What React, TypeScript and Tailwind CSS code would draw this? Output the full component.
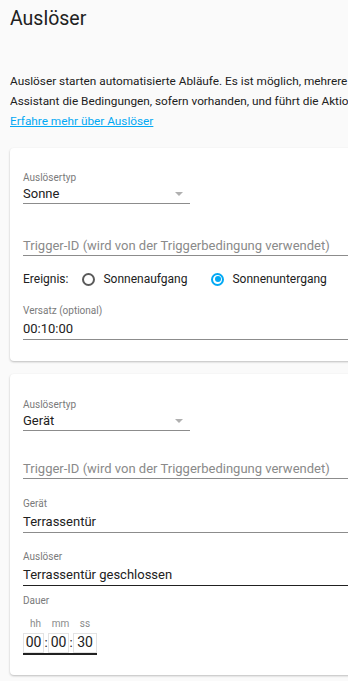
import React from 'react';

const FONT = { fontFamily: 'Roboto, "Noto Sans", Arial, sans-serif' };

function SelectField({ label, value }: { label: string; value: string }) {
  return (
    <div className="w-[167px]">
      <div className="text-[10px] leading-[14px] text-[#7a7a7a]">{label}</div>
      <div className="flex items-center justify-between h-[19px] border-b border-[#8c8c8c]">
        <span className="text-[13px] text-[#212121]">{value}</span>
        <span className="mr-[7px] h-0 w-0 border-x-[4px] border-t-[4px] border-x-transparent border-t-[#b0b0b0]" />
      </div>
    </div>
  );
}

function TextField({ label, value, dark }: { label?: string; value: string; dark?: boolean }) {
  return (
    <div>
      {label && <div className="text-[10px] leading-[14px] text-[#7a7a7a]">{label}</div>}
      <div
        className={
          'h-[22px] flex items-center border-b text-[13px] ' +
          (dark ? 'border-[#212121]' : 'border-[#8c8c8c]')
        }>
        <span className="text-[#212121]">{value}</span>
      </div>
    </div>
  );
}

function Placeholder({ text }: { text: string }) {
  return (
    <div className="h-[20px] flex items-center border-b border-[#8c8c8c] text-[13px] text-[#8a8a8a]">
      {text}
    </div>
  );
}

function Radio({ checked, label }: { checked?: boolean; label: string }) {
  return (
    <label className="flex items-center gap-[8px]">
      <span
        className={
          'flex h-[13px] w-[13px] items-center justify-center rounded-full border-2 ' +
          (checked ? 'border-[#03a9f4]' : 'border-[#5a5a5a]')
        }>
        {checked && <span className="h-[6px] w-[6px] rounded-full bg-[#03a9f4]" />}
      </span>
      <span className="text-[12px] text-[#212121]">{label}</span>
    </label>
  );
}

function TimeBox({ v, w }: { v: string; w: string }) {
  return (
    <span
      className={
        'flex h-[20px] items-center justify-center border border-[#e3e3e3] text-[14px] text-[#212121] ' + w
      }>
      {v}
    </span>
  );
}

export default function App() {
  return (
    <div className="w-[348px] h-[681px] overflow-hidden bg-[#fafafa]" style={FONT}>
      <div className="w-[640px] px-[10px]">
        <h1 className="pt-[5px] text-[19.5px] leading-[28px] text-[#212121]">Auslöser</h1>

        <div className="mt-[38px] text-[11.8px] leading-[20px] text-[#212121]">
          <p className="whitespace-nowrap">
            Auslöser starten automatisierte Abläufe. Es ist möglich, mehrere Auslöser für dieselbe Automatisierung zu definieren. Sobald ein Auslöser startet, prüft Home
          </p>
          <p className="whitespace-nowrap">
            Assistant die Bedingungen, sofern vorhanden, und führt die Aktion aus.
          </p>
          <a href="#" className="block text-[#03a9f4] underline">
            Erfahre mehr über Auslöser
          </a>
        </div>

        {/* Sonne */}
        <div className="mt-[17px] rounded-[4px] bg-white px-[13px] pt-[23px] pb-[21px] shadow-[0_1px_2px_rgba(0,0,0,0.18),0_1px_3px_rgba(0,0,0,0.08)]">
          <SelectField label="Auslösertyp" value="Sonne" />
          <div className="mt-[32px]">
            <Placeholder text="Trigger-ID (wird von der Triggerbedingung verwendet)" />
          </div>
          <div className="mt-[11px] flex h-[24px] items-center">
            <span className="text-[12px] text-[#212121]">Ereignis:</span>
            <div className="ml-[14px] flex items-center gap-[24px]">
              <Radio label="Sonnenaufgang" />
              <Radio checked label="Sonnenuntergang" />
            </div>
          </div>
          <div className="mt-[13px]">
            <TextField label="Versatz (optional)" value="00:10:00" />
          </div>
        </div>

        {/* Gerät */}
        <div className="mt-[13px] rounded-[4px] bg-white px-[13px] pt-[24px] pb-[20px] shadow-[0_1px_2px_rgba(0,0,0,0.18),0_1px_3px_rgba(0,0,0,0.08)]">
          <SelectField label="Auslösertyp" value="Gerät" />
          <div className="mt-[28px]">
            <Placeholder text="Trigger-ID (wird von der Triggerbedingung verwendet)" />
          </div>
          <div className="mt-[18px]">
            <TextField label="Gerät" value="Terrassentür" />
          </div>
          <div className="mt-[17px]">
            <TextField label="Auslöser" value="Terrassentür geschlossen" dark />
          </div>
          <div className="mt-[8px] text-[10px] leading-[14px] text-[#7a7a7a]">Dauer</div>
          <div className="mt-[10px] flex w-[74px] text-[10px] leading-[12px] text-[#8a8a8a]">
            <span className="w-[25px] text-center">hh</span>
            <span className="w-[25px] text-center">mm</span>
            <span className="w-[24px] text-center">ss</span>
          </div>
          <div className="mt-[1px] inline-flex items-center border-b-2 border-[#212121]">
            <TimeBox v="00" w="w-[21px]" />
            <span className="w-[4px] text-center text-[13px] text-[#212121]">:</span>
            <TimeBox v="00" w="w-[21px]" />
            <span className="w-[4px] text-center text-[13px] text-[#212121]">:</span>
            <TimeBox v="30" w="w-[24px]" />
          </div>
        </div>
      </div>
    </div>
  );
}
